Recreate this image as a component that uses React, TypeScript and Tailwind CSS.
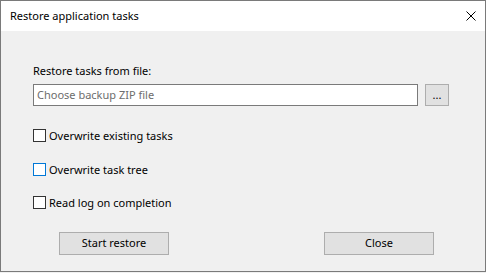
import { useState } from "react"

function Check({ label, hover }: { label: string; hover?: boolean }) {
  const [on, setOn] = useState(false)
  return (
    <label className="flex items-center h-[13px] cursor-default" onClick={() => setOn(!on)}>
      <span
        className={`w-[13px] h-[13px] border bg-white flex items-center justify-center ${
          hover ? "border-[#0078d7]" : "border-[#333333]"
        }`}
      >
        {on && (
          <svg width="9" height="9" viewBox="0 0 9 9">
            <path d="M1 4.5 L3.5 7 L8 1.5" stroke="#000" strokeWidth="1.3" fill="none" />
          </svg>
        )}
      </span>
      <span className="ml-[3px] leading-[16px]">{label}</span>
    </label>
  )
}

export default function App() {
  return (
    <div
      className="w-[486px] h-[273px] bg-[#f0f0f0] text-[11px] text-black"
      style={{ fontFamily: "'Noto Sans', 'Liberation Sans', sans-serif" }}
    >
      <div className="w-[486px] h-[272px] border border-[#7a7a7a] flex flex-col bg-[#f0f0f0]">
        {/* Title bar */}
        <div className="h-[30px] bg-white flex items-center justify-between pl-[9px] pr-[9px] shrink-0">
          <span className="leading-[16px]">Restore application tasks</span>
          <svg width="10" height="10" viewBox="0 0 10 10">
            <path d="M0.5 0.5 L9.5 9.5 M9.5 0.5 L0.5 9.5" stroke="#000" strokeWidth="1" />
          </svg>
        </div>

        {/* Body */}
        <div className="flex flex-col pl-[32px] pr-[36px]">
          <div className="mt-[32px] h-[16px] leading-[16px]">Restore tasks from file:</div>
          <div className="mt-[5px] flex items-center">
            <div className="w-[385px] h-[22px] bg-white border border-[#7a7a7a] flex items-center pl-[3px] text-[#6d6d6d]">
              Choose backup ZIP file
            </div>
            <button className="ml-[7px] w-[24px] h-[22px] bg-[#e1e1e1] border border-[#adadad] flex items-center justify-center leading-none pb-[2px]">
              ...
            </button>
          </div>

          <div className="mt-[23px]">
            <Check label="Overwrite existing tasks" />
          </div>
          <div className="mt-[21px]">
            <Check label="Overwrite task tree" hover />
          </div>
          <div className="mt-[20px]">
            <Check label="Read log on completion" />
          </div>

          <div className="mt-[23px] flex justify-between pl-[26px] pr-[15px]">
            <button className="w-[110px] h-[23px] bg-[#e1e1e1] border border-[#adadad] flex items-center justify-center">
              Start restore
            </button>
            <button className="w-[110px] h-[23px] bg-[#e1e1e1] border border-[#adadad] flex items-center justify-center">
              Close
            </button>
          </div>
        </div>
      </div>
    </div>
  )
}
